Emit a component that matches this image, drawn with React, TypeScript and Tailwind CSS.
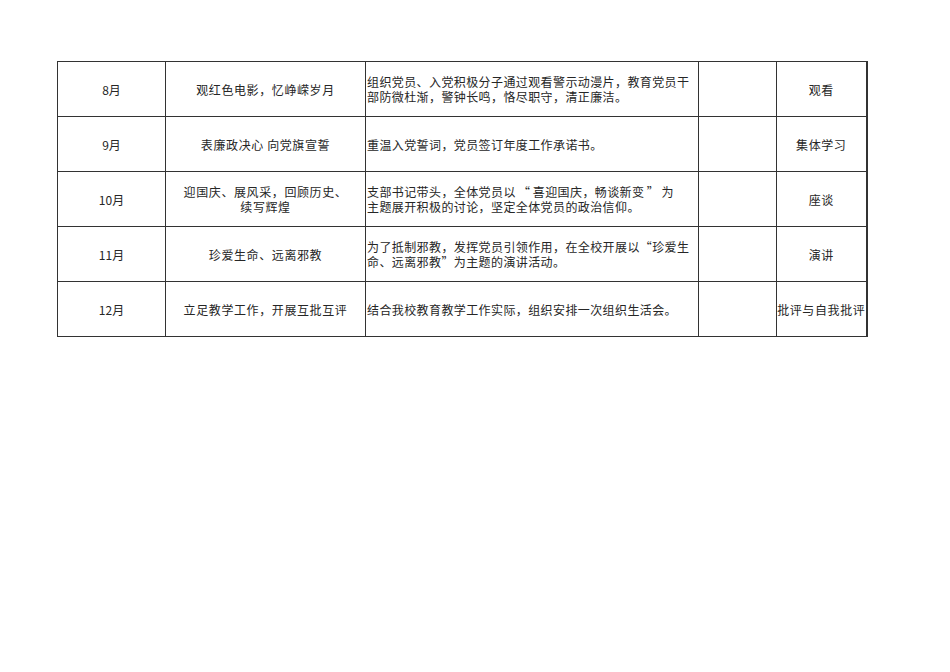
import React from "react";

type Row = { m: string; t: React.ReactNode; d: React.ReactNode; f: string };

const Q = ({ c }: { c: string }) => (
  <span className="inline-block w-[17px] text-center">{c}</span>
);

const rows: Row[] = [
  {
    m: "8月",
    t: "观红色电影，忆峥嵘岁月",
    d: (
      <>
        组织党员、入党积极分子通过观看警示动漫片，教育党员干
        <br />
        部防微杜渐，警钟长鸣，恪尽职守，清正廉洁。
      </>
    ),
    f: "观看",
  },
  {
    m: "9月",
    t: "表廉政决心 向党旗宣誓",
    d: "重温入党誓词，党员签订年度工作承诺书。",
    f: "集体学习",
  },
  {
    m: "10月",
    t: (
      <>
        迎国庆、展风采，回顾历史、
        <br />
        续写辉煌
      </>
    ),
    d: (
      <>
        支部书记带头，全体党员以<Q c="“" />喜迎国庆，畅谈新变<Q c="”" />为
        <br />
        主题展开积极的讨论，坚定全体党员的政治信仰。
      </>
    ),
    f: "座谈",
  },
  {
    m: "11月",
    t: "珍爱生命、远离邪教",
    d: (
      <>
        为了抵制邪教，发挥党员引领作用，在全校开展以“珍爱生
        <br />
        命、远离邪教”为主题的演讲活动。
      </>
    ),
    f: "演讲",
  },
  {
    m: "12月",
    t: "立足教学工作，开展互批互评",
    d: "结合我校教育教学工作实际，组织安排一次组织生活会。",
    f: "批评与自我批评",
  },
];

export default function App() {
  return (
    <div
      className="w-[950px] h-[672px] bg-white overflow-hidden"
      style={{ fontFamily: '"Noto Sans CJK SC", "Noto Sans", sans-serif' }}
    >
      <div className="pt-[61px] pl-[57px]">
        <table className="border-collapse table-fixed w-[809px] text-[12px] leading-[15px] text-[#262626]">
          <colgroup>
            <col className="w-[108px]" />
            <col className="w-[200px]" />
            <col className="w-[333px]" />
            <col className="w-[78px]" />
            <col className="w-[90px]" />
          </colgroup>
          <tbody>
            {rows.map((r, i) => (
              <tr key={i} className="h-[55px]">
                <td className="border border-[#333] text-center align-middle p-0">{r.m}</td>
                <td className="border border-[#333] text-center align-middle p-0 whitespace-nowrap tracking-[0.6px]">
                  {r.t}
                </td>
                <td className="border border-[#333] text-left align-middle p-0 pl-[1px] whitespace-nowrap tracking-[0.4px]">
                  {r.d}
                </td>
                <td className="border border-[#333] p-0"></td>
                <td className="border border-[#333] border-r-2 text-center align-middle p-0 whitespace-nowrap tracking-[0.6px]">
                  {r.f}
                </td>
              </tr>
            ))}
          </tbody>
        </table>
      </div>
    </div>
  );
}
